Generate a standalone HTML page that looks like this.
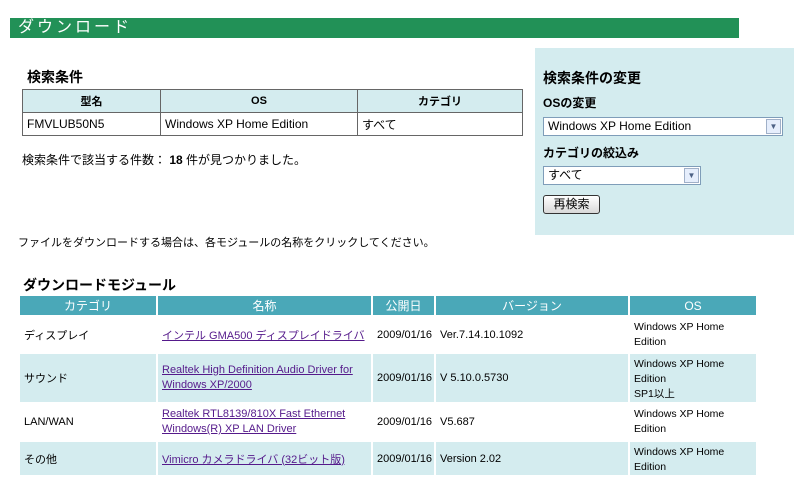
<!DOCTYPE html>
<html><head><meta charset="utf-8"><style>
*{margin:0;padding:0;box-sizing:border-box}
body{width:794px;height:477px;background:#fff;position:relative;overflow:hidden;font-family:"Liberation Sans","Noto Sans CJK JP",sans-serif;font-size:12px;color:#000}
.a{position:absolute;white-space:nowrap}
.bar{left:10px;top:18px;width:729px;height:20px;background:#229157;color:#fff;font-size:16px;line-height:20px;padding-left:8px;letter-spacing:3px}
table{border-collapse:collapse;position:absolute}
.t1{left:22px;top:89px;width:501px}
.t1 td,.t1 th{border:1px solid #666;height:23px;font-size:12px}
.t1 th{background:#d4ecef;font-weight:bold;font-size:11px}
.t1 td{padding-left:4px}
.panel{left:535px;top:48px;width:259px;height:187px;background:#d4ecef}
.sel{position:absolute;background:#fff;border:1px solid #7f9db9;height:19px;font-size:12px;line-height:17px;padding-left:4px}
.arr{position:absolute;right:1px;top:1px;width:15px;height:15px;border:1px solid #a0b0c8;background:#e6eefc;font-size:8px;line-height:13px;text-align:center;color:#4d6185}
.btn{left:543px;top:195px;width:57px;height:19px;border:1px solid #333;border-radius:3px;background:linear-gradient(#fff,#d8d8d8);font-size:12px;line-height:17px;text-align:center}
.t2{left:20px;top:296px;width:738px;border-collapse:separate;border-spacing:0}
.t2 th{background:#4aa8b8;color:#fff;font-weight:normal;height:21px;font-size:12px;border-right:2px solid #fff;border-bottom:2px solid #fff}
.t2 td{border-right:2px solid #fff;border-bottom:2px solid #fff;padding-left:4px;font-size:11px;vertical-align:middle}
.t2 tr.b td{background:#d4ecef}
.t2 a{color:#551a8b;text-decoration:underline}
.t2 td.os{vertical-align:top;padding-top:3px;line-height:15px;font-size:10.5px}
</style></head><body>
<div class="a bar">ダウンロード</div>
<div class="a" style="left:27px;top:67px;font-size:14px;font-weight:bold">検索条件</div>
<table class="t1"><tr><th style="width:138px">型名</th><th style="width:197px">OS</th><th>カテゴリ</th></tr>
<tr><td>FMVLUB50N5</td><td>Windows XP Home Edition</td><td>すべて</td></tr></table>
<div class="a" style="left:22px;top:151px">検索条件で該当する件数： <b>18</b> 件が見つかりました。</div>
<div class="a panel"></div>
<div class="a" style="left:543px;top:68px;font-size:14px;font-weight:bold">検索条件の変更</div>
<div class="a" style="left:543px;top:94px;font-weight:bold">OSの変更</div>
<div class="sel" style="left:543px;top:117px;width:240px">Windows XP Home Edition<div class="arr">▼</div></div>
<div class="a" style="left:543px;top:144px;font-weight:bold">カテゴリの絞込み</div>
<div class="sel" style="left:543px;top:166px;width:158px">すべて<div class="arr">▼</div></div>
<div class="a btn">再検索</div>
<div class="a" style="left:18px;top:234px;font-size:11px">ファイルをダウンロードする場合は、各モジュールの名称をクリックしてください。</div>
<div class="a" style="left:23px;top:275px;font-size:14px;font-weight:bold">ダウンロードモジュール</div>
<table class="t2">
<tr><th style="width:138px">カテゴリ</th><th style="width:215px">名称</th><th style="width:63px">公開日</th><th style="width:194px">バージョン</th><th>OS</th></tr>
<tr style="height:37px"><td>ディスプレイ</td><td><a>インテル GMA500 ディスプレイドライバ</a></td><td>2009/01/16</td><td>Ver.7.14.10.1092</td><td class="os">Windows XP Home<br>Edition</td></tr>
<tr class="b" style="height:48px"><td><a style="color:#000;text-decoration:none">サウンド</a></td><td style="line-height:15px"><a>Realtek High Definition Audio Driver for<br>Windows XP/2000</a></td><td>2009/01/16</td><td>V 5.10.0.5730</td><td class="os">Windows XP Home<br>Edition<br>SP1以上</td></tr>
<tr style="height:38px"><td>LAN/WAN</td><td style="line-height:15px"><a>Realtek RTL8139/810X Fast Ethernet<br>Windows(R) XP LAN Driver</a></td><td>2009/01/16</td><td>V5.687</td><td class="os">Windows XP Home<br>Edition</td></tr>
<tr class="b" style="height:35px"><td>その他</td><td><a>Vimicro カメラドライバ (32ビット版)</a></td><td>2009/01/16</td><td>Version 2.02</td><td class="os">Windows XP Home<br>Edition</td></tr>
</table>
</body></html>
